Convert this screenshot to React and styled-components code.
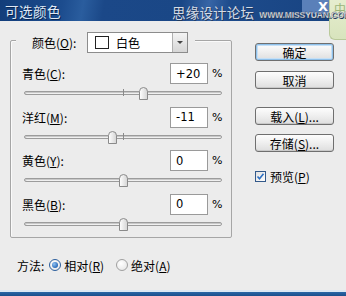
import React from 'react';
import styled, { createGlobalStyle } from 'styled-components';

const GlobalStyle = createGlobalStyle`
  body {
    margin: 0;
    background: #ececec;
    font-family: "Noto Sans CJK SC", "Liberation Sans", sans-serif;
  }
`;

const FONT = '"Noto Sans CJK SC", "Liberation Sans", sans-serif';

const Window = styled.div`
  position: relative;
  width: 346px;
  height: 296px;
  display: flex;
  flex-direction: column;
  background: #ececec;
  overflow: hidden;
  font-family: ${FONT};
  font-size: 12px;
  color: #000;
`;

// Title bar
const TitleBar = styled.div`
  height: 21px;
  flex: none;
  display: flex;
  align-items: center;
  background: linear-gradient(
    100deg,
    #123d7a 0%,
    #1c4c8e 18%,
    #2a5d9e 24%,
    #1b4888 30%,
    #1a4786 52%,
    #3765a6 60%,
    #1d4b8b 66%,
    #174280 100%
  );
`;

const Title = styled.span`
  margin-left: 5px;
  font-size: 13.5px;
  color: #dfe8f6;
  text-shadow: 1px 1px 0 #0a2550;
  letter-spacing: 0.5px;
`;

// watermark stamped over the title bar of the screenshot
const Watermark = styled.div`
  position: absolute;
  top: 4px;
  left: 172px;
  z-index: 3;
  width: max-content;
  white-space: nowrap;
  display: flex;
  align-items: flex-end;
  gap: 5px;
  color: #d5dbe4;
  text-shadow: 1px 1px 0 #20385c;
  pointer-events: none;
`;

const WatermarkCn = styled.span`
  font-size: 13.5px;
  line-height: 17px;
  letter-spacing: 0.2px;
`;

const WatermarkUrl = styled.span`
  font-family: "Liberation Sans", sans-serif;
  font-size: 8.5px;
  line-height: 12px;
  font-weight: bold;
  color: #ffffff;
  -webkit-text-stroke: 0.3px #3a4a60;
  letter-spacing: -0.1px;
`;

const CloseBox = styled.div`
  position: absolute;
  top: 0;
  right: 17px;
  z-index: 2;
  width: 27px;
  height: 14px;
  background: #5a80b9;
  display: flex;
  align-items: flex-start;
  justify-content: flex-end;
  padding-right: 1px;
  box-sizing: border-box;
  color: #fff;
  font-family: "DejaVu Sans", sans-serif;
  font-weight: bold;
  font-size: 13px;
  line-height: 14px;
`;

const CornerArt = styled.div`
  position: absolute;
  top: 0;
  right: 0;
  z-index: 1;
  width: 17px;
  height: 40px;
  background: linear-gradient(180deg, #e6edcf 0%, #d8e4bd 100%);
  border-left: 1px solid #b9c99a;
  border-bottom: 1px solid #b9c99a;
  border-bottom-left-radius: 6px;
  color: #9bb57a;
  font-size: 12px;
  line-height: 1;
  padding: 3px 0 0 4px;
  box-sizing: border-box;
`;

// Body
const Body = styled.div`
  flex: 1;
  display: flex;
`;

const LeftCol = styled.div`
  width: 222px;
  margin-left: 10px;
  display: flex;
  flex-direction: column;
`;

const Group = styled.div`
  margin-top: 19px;
  border: 1px solid #a6a6a6;
  box-shadow: inset 1px 1px 0 #fafafa;
  border-radius: 2px;
`;

const GroupHeader = styled.div`
  margin: -9px 0 0 5px;
  height: 21px;
  width: max-content;
  display: flex;
  align-items: center;
  padding: 0 7px 0 16px;
  background: #ececec;
`;

const HeaderLabel = styled.span`
  width: 55px;
`;

const Select = styled.div`
  width: 101px;
  height: 21px;
  box-sizing: border-box;
  border: 1px solid #8c8c8c;
  background: #fff;
  display: flex;
  align-items: center;
  padding-left: 7px;
`;

const Swatch = styled.span`
  width: 14px;
  height: 13px;
  box-sizing: border-box;
  border: 1px solid #222;
  background: #fff;
  margin-right: 7px;
`;

const SelectText = styled.span`
  flex: 1;
  font-size: 12px;
`;

const DropButton = styled.span`
  width: 15px;
  height: 19px;
  box-sizing: border-box;
  border-left: 1px solid #b0b0b0;
  background: linear-gradient(180deg, #f4f4f4 0%, #d6d6d6 100%);
  display: flex;
  align-items: center;
  justify-content: center;
  &::after {
    content: '';
    border-left: 3px solid transparent;
    border-right: 3px solid transparent;
    border-top: 3px solid #444;
  }
`;

const Rows = styled.div`
  margin-top: 10px;
`;

const Row = styled.div`
  height: 43.5px;
  display: flex;
  flex-direction: column;
`;

const InputLine = styled.div`
  height: 21px;
  display: flex;
  align-items: center;
  padding: 0 9px 0 11px;
`;

const Label = styled.span`
  flex: 1;
  font-size: 12px;
`;

const Underline = styled.span`
  text-decoration: underline;
`;

const NumberBox = styled.div`
  width: 38px;
  height: 21px;
  box-sizing: border-box;
  border: 1px solid #9a9a9a;
  background: #fff;
  display: flex;
  align-items: center;
  padding-left: 5px;
  font-family: "DejaVu Sans", sans-serif;
  font-size: 11.5px;
`;

const Percent = styled.span`
  width: 10px;
  margin-left: 4px;
  font-family: "DejaVu Sans", sans-serif;
  font-size: 11px;
`;

const SliderArea = styled.div`
  position: relative;
  height: 22px;
  margin: 0 9px 0 13px;
`;

const Track = styled.div`
  position: absolute;
  left: 0;
  right: 0;
  top: 7px;
  height: 4px;
  box-sizing: border-box;
  border: 1px solid #9c9c9c;
  border-radius: 2px;
  background: #f0f0f0;
  box-shadow: inset 1px 1px 0 #c8c8c8;
`;

const Tick = styled.div`
  position: absolute;
  left: 99px;
  top: 5px;
  width: 1px;
  height: 7px;
  background: #8a8a8a;
`;

const ThumbWrap = styled.div`
  position: absolute;
  top: 2px;
  width: 9px;
  height: 13px;
  margin-left: -4px;
`;

const MethodRow = styled.div`
  margin-top: 19px;
  height: 16px;
  display: flex;
  align-items: center;
  padding-left: 7px;
`;

const MethodLabel = styled.span`
  margin-right: 5px;
`;

const RadioOption = styled.label`
  display: flex;
  align-items: center;
  margin-right: 12px;
`;

const RadioDot = styled.span`
  width: 12px;
  height: 12px;
  box-sizing: border-box;
  border-radius: 50%;
  border: 1px solid ${props => (props.checked ? '#2b5e9c' : '#a0a0a0')};
  background: radial-gradient(circle at 40% 35%, #ffffff 0%, #e2e2e2 100%);
  display: flex;
  align-items: center;
  justify-content: center;
  margin-right: 3px;
  &::after {
    content: '';
    display: ${props => (props.checked ? 'block' : 'none')};
    width: 6px;
    height: 6px;
    border-radius: 50%;
    background: radial-gradient(circle at 35% 35%, #8fc2f2 0%, #1e5fb2 80%);
  }
`;

// Right column
const RightCol = styled.div`
  margin-left: 23px;
  padding-top: 22px;
  display: flex;
  flex-direction: column;
`;

const Button = styled.div`
  width: 79px;
  height: 18px;
  box-sizing: border-box;
  border: 1px solid #6f6f6f;
  border-radius: 3px;
  background: linear-gradient(180deg, #fdfdfd 0%, #f0f0f0 45%, #dedede 100%);
  box-shadow: ${props =>
    props.primary ? 'inset 0 0 0 1px #8ec0ea, inset 0 0 0 2px #c6e0f6' : 'inset 0 -1px 0 #c9c9c9'};
  display: flex;
  align-items: center;
  justify-content: center;
  font-size: 12px;
  margin-top: ${props => props.gap || 0}px;
`;

const CheckRow = styled.div`
  margin-top: 16px;
  display: flex;
  align-items: center;
`;

const CheckBox = styled.span`
  width: 11px;
  height: 11px;
  box-sizing: border-box;
  border: 1px solid #33598a;
  background: linear-gradient(135deg, #e0e0e0 0%, #ffffff 100%);
  display: flex;
  align-items: center;
  justify-content: center;
  margin-right: 4px;
`;

const BottomEdge = styled.div`
  flex: none;
  height: 6px;
  border-top: 2px solid #dce8f3;
  background: linear-gradient(180deg, #2a66a6 0%, #1a4f8c 100%);
  box-sizing: border-box;
`;

const Thumb = () => (
  <svg width="9" height="13" viewBox="0 0 9 13">
    <defs>
      <linearGradient id="thumbFill" x1="0" y1="0" x2="1" y2="0">
        <stop offset="0" stopColor="#ffffff" />
        <stop offset="1" stopColor="#d4d4d4" />
      </linearGradient>
    </defs>
    <path
      d="M0.5 12.5 V4.5 Q0.5 0.5 4.5 0.5 Q8.5 0.5 8.5 4.5 V12.5 Z"
      fill="url(#thumbFill)"
      stroke="#8a8a8a"
    />
  </svg>
);

const CheckMark = () => (
  <svg width="9" height="9" viewBox="0 0 9 9">
    <path d="M1.5 4.5 L3.5 6.8 L7.5 1.8" fill="none" stroke="#2c6fc2" strokeWidth="1.6" />
  </svg>
);

const sliders = [
  { name: '青色', key: 'C', value: '+20', num: 20 },
  { name: '洋红', key: 'M', value: '-11', num: -11 },
  { name: '黄色', key: 'Y', value: '0', num: 0 },
  { name: '黑色', key: 'B', value: '0', num: 0 }
];

const App = () => (
  <Window>
    <GlobalStyle />
    <TitleBar>
      <Title>可选颜色</Title>
    </TitleBar>
    <CloseBox>X</CloseBox>
    <CornerArt>中</CornerArt>
    <Watermark>
      <WatermarkCn>思缘设计论坛</WatermarkCn>
      <WatermarkUrl>WWW.MISSYUAN.COM</WatermarkUrl>
    </Watermark>
    <Body>
      <LeftCol>
        <Group>
          <GroupHeader>
            <HeaderLabel>
              颜色(<Underline>O</Underline>):
            </HeaderLabel>
            <Select>
              <Swatch />
              <SelectText>白色</SelectText>
              <DropButton />
            </Select>
          </GroupHeader>
          <Rows>
            {sliders.map(s => (
              <Row key={s.key}>
                <InputLine>
                  <Label>
                    {s.name}(<Underline>{s.key}</Underline>):
                  </Label>
                  <NumberBox>{s.value}</NumberBox>
                  <Percent>%</Percent>
                </InputLine>
                <SliderArea>
                  <Track />
                  <Tick />
                  <ThumbWrap style={{ left: `${99 + s.num * 0.99}px` }}>
                    <Thumb />
                  </ThumbWrap>
                </SliderArea>
              </Row>
            ))}
          </Rows>
        </Group>
        <MethodRow>
          <MethodLabel>方法:</MethodLabel>
          <RadioOption>
            <RadioDot checked />
            相对(<Underline>R</Underline>)
          </RadioOption>
          <RadioOption>
            <RadioDot />
            绝对(<Underline>A</Underline>)
          </RadioOption>
        </MethodRow>
      </LeftCol>
      <RightCol>
        <Button primary>确定</Button>
        <Button gap={10}>取消</Button>
        <Button gap={18}>
          载入(<Underline>L</Underline>)...
        </Button>
        <Button gap={9}>
          存储(<Underline>S</Underline>)...
        </Button>
        <CheckRow>
          <CheckBox>
            <CheckMark />
          </CheckBox>
          预览(<Underline>P</Underline>)
        </CheckRow>
      </RightCol>
    </Body>
    <BottomEdge />
  </Window>
);

export default App;
